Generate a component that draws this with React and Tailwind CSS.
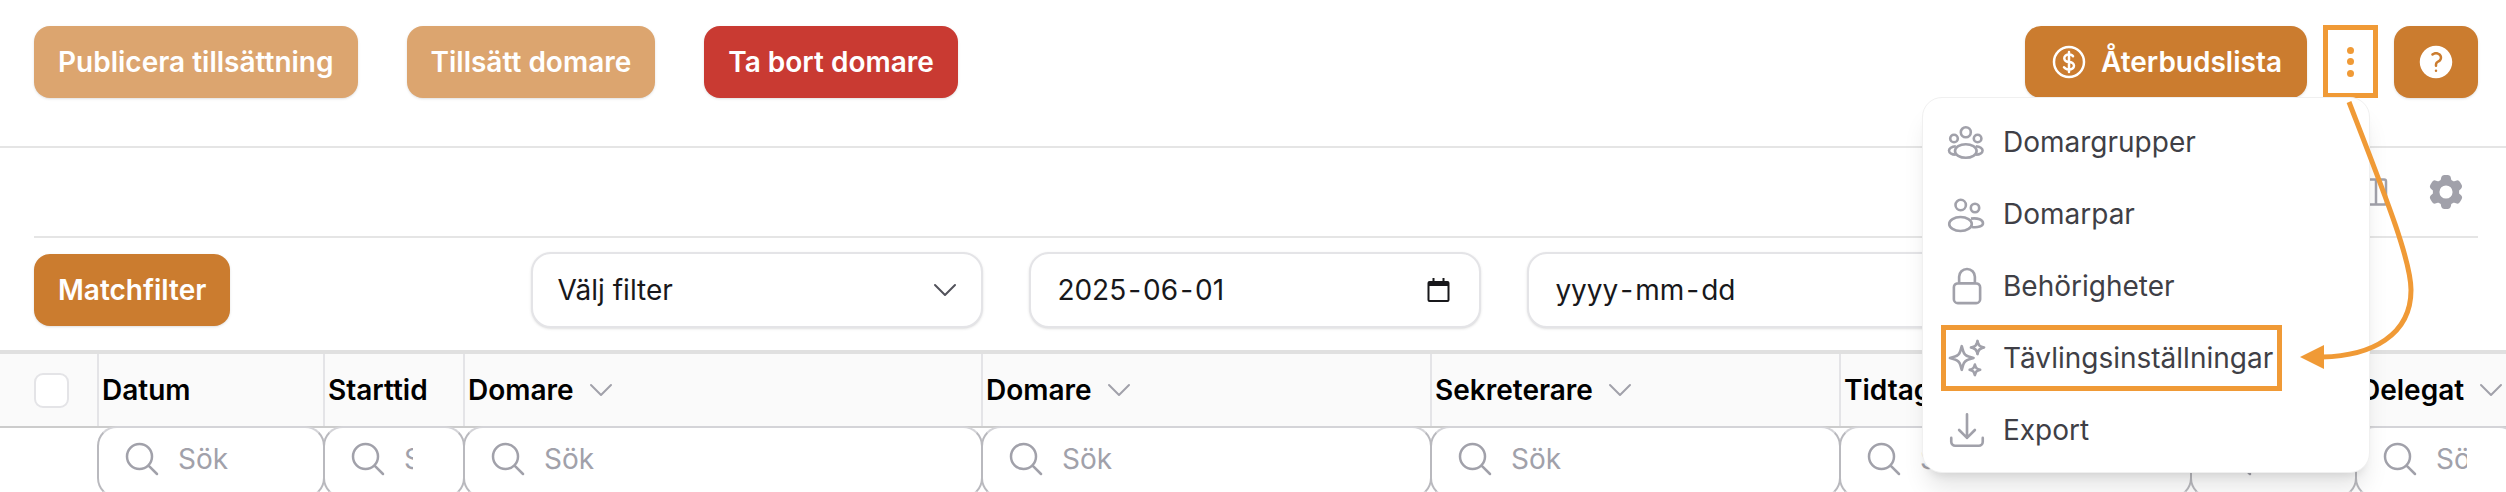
import React from "react";
import {
  HiOutlineLockClosed,
  HiOutlineSparkles,
  HiOutlineArrowDownTray,
  HiOutlineCurrencyDollar,
  HiOutlineMagnifyingGlass,
  HiOutlineChevronDown,
  HiOutlineViewColumns,
  HiQuestionMarkCircle,
  HiCog6Tooth,
} from "react-icons/hi2";

const gridCols =
  "grid grid-cols-[97px_226px_140px_518px_449px_409px_351px_165px_162px]";

const columns = [
  { title: "Datum" },
  { title: "Starttid" },
  { title: "Domare", sort: true },
  { title: "Domare", sort: true },
  { title: "Sekreterare", sort: true },
  { title: "Tidtagare", sort: true },
  { title: "" },
  { title: "Delegat", sort: true },
];

function GroupIcon({ className }) {
  return (
    <svg viewBox="-2 -6 42 42" fill="none" stroke="currentColor" strokeWidth="2.6" className={className}>
      <circle cx="17.8" cy="5.3" r="5" />
      <circle cx="6" cy="11.5" r="3.8" />
      <circle cx="29.6" cy="11.5" r="3.8" />
      <ellipse cx="17.8" cy="24" rx="10.8" ry="6.8" />
      <path d="M7.8 19.2C3.5 19.4 1 21.6 1 23.6S3.5 27.6 7.8 27.8" />
      <path d="M27.8 19.2C32.1 19.4 34.6 21.6 34.6 23.6S32.1 27.6 27.8 27.8" />
    </svg>
  );
}

function PairIcon({ className }) {
  return (
    <svg viewBox="-2 -6 42 42" fill="none" stroke="currentColor" strokeWidth="2.6" className={className}>
      <circle cx="12.7" cy="6" r="5.2" />
      <circle cx="27" cy="9" r="4.2" />
      <ellipse cx="12.5" cy="25" rx="11.3" ry="7" />
      <path d="M23 19.6C30 18.6 35 21 35 24.2S30 28.8 23.6 28" />
    </svg>
  );
}

const menuItems = [
  { label: "Domargrupper", Icon: GroupIcon },
  { label: "Domarpar", Icon: PairIcon },
  { label: "Behörigheter", Icon: HiOutlineLockClosed },
  { label: "Tävlingsinställningar", Icon: HiOutlineSparkles, marked: true },
  { label: "Export", Icon: HiOutlineArrowDownTray },
];

function ActionButton({ color, children }) {
  return (
    <button className={`h-[72px] px-[24px] rounded-[16px] text-white text-[28px] font-semibold shadow-sm ${color}`}>
      {children}
    </button>
  );
}

function DateField({ parts, icon }) {
  return (
    <div className="w-[452px] h-[76px] flex items-center justify-between pl-[26px] pr-[29px] rounded-[20px] border-2 border-[#e4e4e7] bg-white shadow-sm text-[28px] text-[#18181b]">
      <span>
        {parts[0]}
        <span className="mx-[2px]">-</span>
        {parts[1]}
        <span className="mx-[2px]">-</span>
        {parts[2]}
      </span>
      {icon && (
        <svg width="23" height="24" viewBox="0 0 22 24" className="text-[#18181b]">
          <path d="M5 0h2v3h8V0h2v3h3a2 2 0 0 1 2 2v17a2 2 0 0 1-2 2H2a2 2 0 0 1-2-2V5a2 2 0 0 1 2-2h3zM2 8v14h18V8z" fill="currentColor" />
        </svg>
      )}
    </div>
  );
}

export default function App() {
  return (
    <div className="relative w-[2506px] h-[492px] overflow-hidden bg-white font-['Inter',sans-serif]">
      <header className="h-[148px] border-b-2 border-[#e5e5e5] pt-[26px] pl-[34px] pr-[28px] flex justify-between items-start">
        <div className="flex gap-[49px]">
          <ActionButton color="bg-[#dca56f]">Publicera tillsättning</ActionButton>
          <ActionButton color="bg-[#dca56f]">Tillsätt domare</ActionButton>
          <ActionButton color="bg-[#c93a32]">Ta bort domare</ActionButton>
        </div>
        <div className="flex items-start gap-[16px]">
          <button className="h-[72px] pl-[24px] pr-[25px] rounded-[16px] bg-[#cb7c2f] text-white text-[28px] font-semibold shadow-sm flex items-center gap-[12px]">
            <HiOutlineCurrencyDollar className="size-[40px]" />
            Återbudslista
          </button>
          <button className="w-[55px] h-[73px] -mt-px border-[5px] border-[#f09a36] flex flex-col items-center justify-center gap-[4.5px]">
            <span className="size-[7px] rounded-full bg-[#f09a36]" />
            <span className="size-[7px] rounded-full bg-[#f09a36]" />
            <span className="size-[7px] rounded-full bg-[#f09a36]" />
          </button>
          <button className="w-[84px] h-[72px] rounded-[16px] bg-[#cb7c2f] shadow-sm flex items-center justify-center">
            <HiQuestionMarkCircle className="size-[40px] text-white" />
          </button>
        </div>
      </header>

      <div className="h-[90px] ml-[34px] mr-[28px] border-b-2 border-[#e5e5e5] flex items-center justify-end gap-[34px] pr-[11px]">
        <HiOutlineViewColumns className="size-[40px] text-[#a1a1aa]" />
        <HiCog6Tooth className="size-[42px] text-[#a1a1aa]" />
      </div>

      <div className="h-[104px] mb-[8px] pl-[34px] flex items-center">
        <ActionButton color="bg-[#cb7c2f]">Matchfilter</ActionButton>
        <div className="ml-[301px] flex gap-[46px] shrink-0">
          <div className="w-[452px] h-[76px] flex items-center justify-between pl-[24px] pr-[20px] rounded-[20px] border-2 border-[#e4e4e7] bg-white shadow-sm text-[28px] text-[#18181b]">
            Välj filter
            <HiOutlineChevronDown className="size-[32px] text-[#52525b]" />
          </div>
          <DateField parts={["2025", "06", "01"]} icon />
          <DateField parts={["yyyy", "mm", "dd"]} />
        </div>
      </div>

      <div className="border-t-4 border-[#e0e0e0]">
        <div className={`${gridCols} h-[74px] bg-[#fafafa] border-b-2 border-[#cccccc]`}>
          <div className="flex items-center pl-[34px]">
            <span className="size-[35px] rounded-[9px] border-2 border-[#e4e4e7] bg-white" />
          </div>
          {columns.map((col, i) => (
            <div key={i} className="flex items-center gap-[11px] pl-[3px] border-l-2 border-[#e4e4e7] text-[28px] font-semibold text-black whitespace-nowrap">
              {col.title}
              {col.sort && <HiOutlineChevronDown className="size-[32px] text-[#a1a1aa]" />}
            </div>
          ))}
        </div>
        <div className={`${gridCols} -mt-[2px]`}>
          <div />
          {columns.map((col, i) => (
            <div key={i} className="h-[72px] -mr-[2px] flex items-center gap-[16px] pl-[23px] pr-[50px] rounded-[20px] border-2 border-x-[#b9b9be] border-y-[#d4d4d8] bg-white">
              <HiOutlineMagnifyingGlass className="size-[40px] shrink-0 text-[#a1a1aa] relative -top-[3px]" />
              <input
                placeholder="Sök"
                className="min-w-0 w-full bg-transparent outline-none text-[28px] -mt-[6px] placeholder:text-[#a1a1aa]"
              />
            </div>
          ))}
        </div>
      </div>

      {/* oppen meny */}
      <div className="absolute left-[1922px] top-[97px] w-[448px] h-[376px] pt-[8px] rounded-[20px] border border-[#f0f0f0] bg-white shadow-xl">
        {menuItems.map(({ label, Icon, marked }) => (
          <div key={label} className="relative h-[72px] flex items-center gap-[15px] pl-[23px] text-[28px] text-[#3f3f46]">
            <Icon className="size-[42px] text-[#a1a1aa]" />
            {label}
            {marked && (
              <span className="absolute left-[18px] top-[3px] w-[341px] h-[66px] border-[5px] border-[#f09a36]" />
            )}
          </div>
        ))}
      </div>

      {/* pil fran menyknappen */}
      <svg className="absolute inset-0 pointer-events-none" width="2506" height="492" viewBox="0 0 2506 492">
        <path d="M2349 102C2385 195 2411 260 2411 290C2411 335 2372 356 2322 357" fill="none" stroke="#f09a36" strokeWidth="5" />
        <path d="M2300 357L2324 345V369Z" fill="#f09a36" />
      </svg>
    </div>
  );
}
